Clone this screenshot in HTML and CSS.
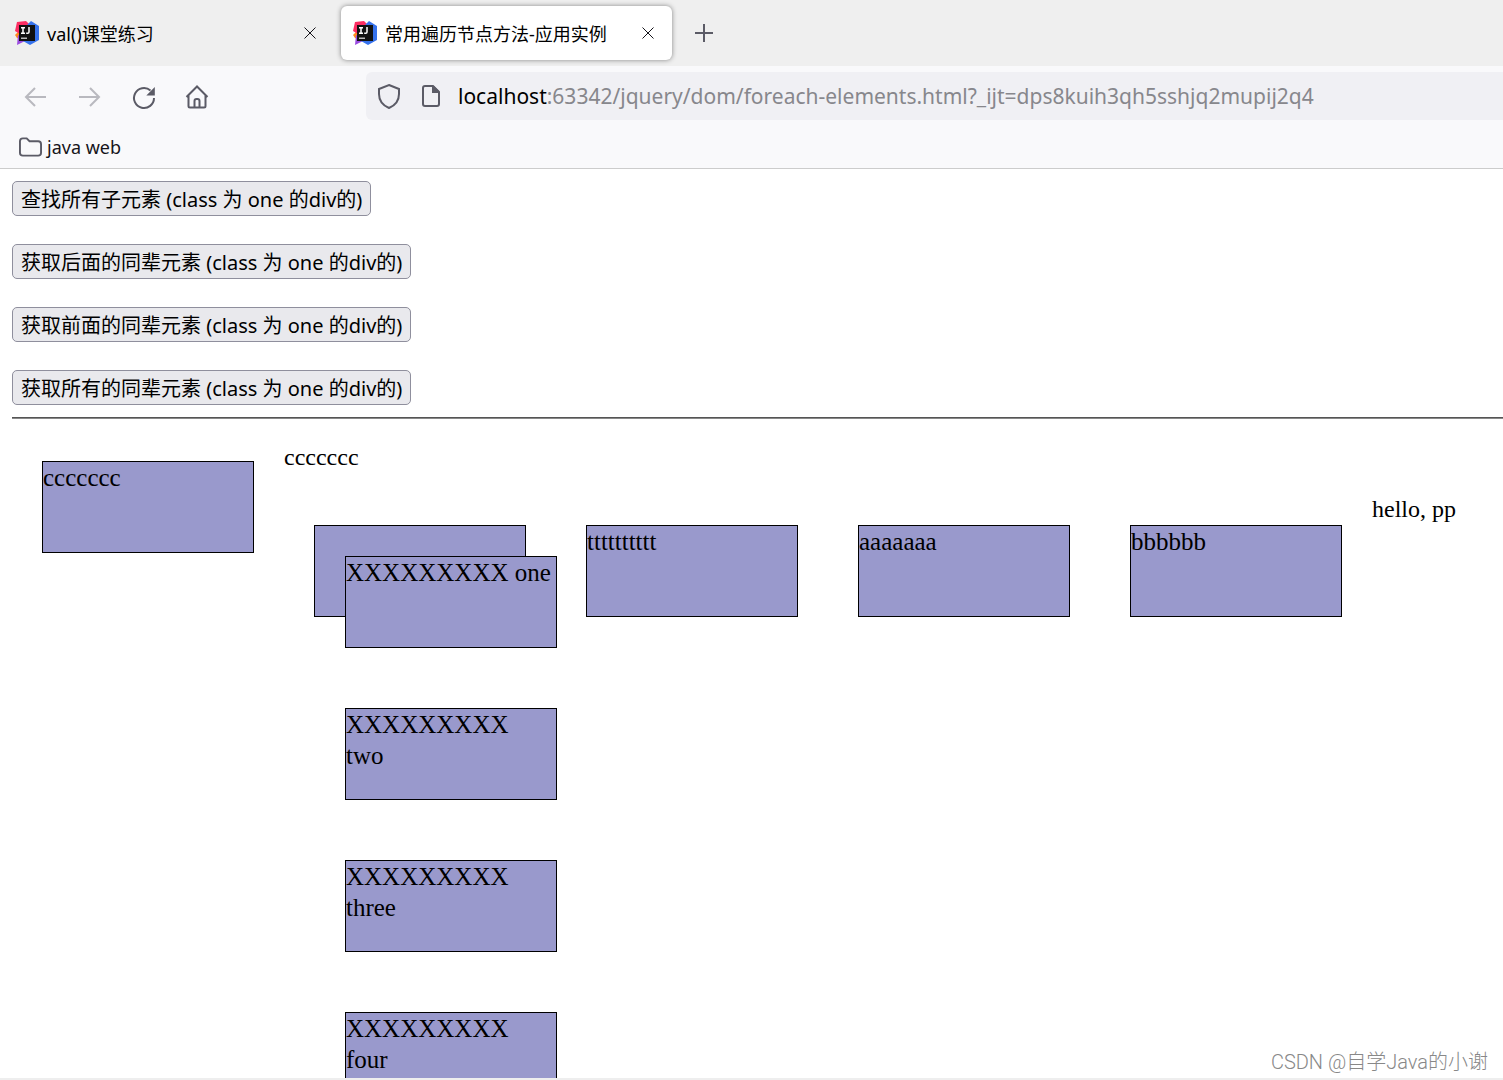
FILE: index.html
```html
<!DOCTYPE html>
<html lang="zh-CN">
<head>
<meta charset="utf-8">
<title>常用遍历节点方法-应用实例</title>
<link rel="stylesheet" href="styles.css">
</head>
<body>
<svg class="defs" aria-hidden="true">
  <symbol id="idea" viewBox="0 0 24 24">
    <path fill="#ff8a1c" d="M0 14 5 9v9l-3-1z"/>
    <path fill="#9a4be0" d="M3 14 2 24l10-5z"/>
    <path fill="#fc2d62" d="M2 1 11 0l5 5-8 10-8-5z"/>
    <path fill="#3672ec" d="m12 4 4-4 8 5v14l-9 5-7-4z"/>
    <path fill="#111" d="M4 4h16v16H4z"/>
    <path fill="none" stroke="#fff" stroke-width="1.5" d="M6 6.700h4M8 6.700v5.600M6 12.300h4M14 6v5q0 1.300-1.300 1.300h-1.500"/>
    <path fill="#bbb" d="M6 16.500h6V18H6z"/>
  </symbol>
  <symbol id="close" viewBox="0 0 12 12"><path d="m.5.5 11 11m0-11-11 11"/></symbol>
</svg>

<header class="browser">
  <nav class="tabs">
    <div class="tab">
      <svg class="favicon"><use href="#idea"/></svg>
      <span class="tab-title">val()课堂练习</span>
      <button class="close" aria-label="关闭"><svg><use href="#close"/></svg></button>
    </div>
    <div class="tab active">
      <svg class="favicon"><use href="#idea"/></svg>
      <span class="tab-title">常用遍历节点方法-应用实例</span>
      <button class="close" aria-label="关闭"><svg><use href="#close"/></svg></button>
    </div>
    <button class="new-tab" aria-label="新标签页"><svg viewBox="0 0 18 18"><path d="M9 0v18M0 9h18"/></svg></button>
  </nav>
  <div class="toolbar">
    <div class="nav-buttons">
      <button class="icon faded" aria-label="后退"><svg viewBox="0 0 24 24"><path d="M22 13H2m9-9-9 9 9 9"/></svg></button>
      <button class="icon faded" aria-label="前进"><svg viewBox="0 0 24 24"><path d="M1 13h20m-9-9 9 9-9 9"/></svg></button>
      <button class="icon" aria-label="刷新"><svg viewBox="0 0 24 24"><path d="M22 14a10 10 0 1 1-3.500-7.600"/><path class="solid" d="M22.800 3v8.500h-8.500z"/></svg></button>
      <button class="icon" aria-label="主页"><svg viewBox="0 0 24 24"><path d="M.500 13 11 2.500 21.500 13M2.500 11.500V22q0 1.500 1.500 1.500h14q1.500 0 1.500-1.500V11.500M8.500 23v-6q0-2 2-2h1q2 0 2 2v6"/></svg></button>
    </div>
    <div class="address">
      <svg class="address-icon" viewBox="0 0 24 24"><path d="M12 1 22 5v5c0 6-3 11-10 14C5 21 2 16 2 10V5z"/></svg>
      <svg class="address-icon page-icon" viewBox="0 0 24 24"><path d="M14 2H6Q4 2 4 4v16q0 2 2 2h12q2 0 2-2V8z"/><path class="solid" d="M13 2h2l5 5v2h-7z"/></svg>
      <label class="host" for="url">localhost</label>
      <input class="url" id="url" type="text" spellcheck="false" value=":63342/jquery/dom/foreach-elements.html?_ijt=dps8kuih3qh5sshjq2mupij2q4">
    </div>
  </div>
  <div class="bookmarks">
    <a class="bookmark" href="#"><svg viewBox="0 0 24 20"><path d="M1 4q0-3 3-3h4l3 3h9q3 0 3 3v9q0 3-3 3H4q-3 0-3-3z"/></svg>java web</a>
  </div>
</header>

<main class="page">
  <div class="actions">
    <button class="action">查找所有子元素 (class 为 one 的div的)</button>
    <button class="action">获取后面的同辈元素 (class 为 one 的div的)</button>
    <button class="action">获取前面的同辈元素 (class 为 one 的div的)</button>
    <button class="action">获取所有的同辈元素 (class 为 one 的div的)</button>
  </div>
  <hr class="rule">
  <div class="demo">
    <div class="box">ccccccc</div>
    <div class="siblings">
      <p class="text">ccccccc</p>
      <div class="row">
        <div class="box parent">
          <div class="box">XXXXXXXXX one</div>
          <div class="box">XXXXXXXXX<br>two</div>
          <div class="box">XXXXXXXXX<br>three</div>
          <div class="box">XXXXXXXXX<br>four</div>
        </div>
        <div class="box">tttttttttt</div>
        <div class="box">aaaaaaa</div>
        <div class="box">bbbbbb</div>
        <p class="text">hello, pp</p>
      </div>
    </div>
  </div>
</main>
<div class="watermark">CSDN @自学Java的小谢</div>
</body>
</html>
```

FILE: styles.css
```css
* { box-sizing: border-box; }

body {
  margin: 0;
  height: 100vh;
  display: flex;
  flex-direction: column;
  position: relative;
  overflow: hidden;
  background: #fff;
  color: #000;
  font-family: "Liberation Serif", "Noto Sans CJK SC", serif;
}

.defs { display: none; }

svg { display: block; overflow: visible; fill: none; stroke: #5b5b66; stroke-width: 2; }
.solid { fill: #5b5b66; stroke: none; }

.browser {
  flex: none;
  border-bottom: 1px solid #ccc;
  background: #f9f9fb;
  font-family: "Noto Sans", "Noto Sans CJK SC", sans-serif;
}
.browser button { padding: 0; border: 0; background: none; }

.tabs {
  display: flex;
  align-items: center;
  gap: 7px;
  height: 66px;
  padding: 0 3px;
  background: #efefef;
}
.tab {
  display: flex;
  align-items: center;
  gap: 8px;
  width: 331px;
  height: 54px;
  padding: 0 18px 0 12px;
  border-radius: 6px;
  font-size: 18px;
}
.active { background: #fff; box-shadow: 0 0 5px rgba(0, 0, 0, .45); }
.favicon { width: 24px; height: 24px; stroke: none; }
.tab-title { flex: 1; white-space: nowrap; }
.close svg { width: 12px; height: 12px; stroke: #15141a; stroke-width: 1; }
.new-tab { margin-left: 16px; }
.new-tab svg { width: 18px; height: 18px; }

.toolbar { display: flex; align-items: center; height: 60px; }
.nav-buttons { display: flex; gap: 30px; width: 366px; padding-left: 24px; }
.icon svg { width: 24px; height: 24px; }
.faded { opacity: .4; }

.address {
  flex: 1;
  display: flex;
  align-items: center;
  height: 48px;
  padding-left: 11px;
  border-radius: 6px 0 0 6px;
  background: #f0f0f4;
  font-size: 21px;
}
.address-icon { width: 24px; height: 24px; margin-right: 18px; }
.page-icon { margin-right: 15px; }
.url {
  flex: 1;
  min-width: 0;
  padding: 0;
  border: 0;
  outline: 0;
  background: none;
  color: #87878c;
  font: inherit;
}

.bookmarks { height: 42px; padding: 0 19px; }
.bookmark {
  display: inline-flex;
  align-items: center;
  gap: 5px;
  height: 42px;
  color: #15141a;
  font-size: 18px;
  text-decoration: none;
}
.bookmark svg { width: 23px; height: 20px; }

.page {
  flex: 1;
  min-height: 0;
  overflow: hidden;
  padding: 12px 0 0 12px;
  border-bottom: 2px solid #eee;
}
.actions {
  display: flex;
  flex-direction: column;
  align-items: flex-start;
  gap: 28px;
}
.action {
  height: 35px;
  padding: 0 8px;
  border: 1px solid #8f8f9d;
  border-radius: 5px;
  background: #e9e9ed;
  color: #000;
  font: 20px "Noto Sans", "Noto Sans CJK SC", sans-serif;
}
.rule { margin: 12px 0; border: 0; border-top: 1px solid #555; border-bottom: 1px solid #888; }

.demo { display: flex; align-items: flex-start; }
.box {
  flex: none;
  width: 212px;
  height: 92px;
  margin: 30px;
  border: 1px solid #000;
  background: #99c;
  font-size: 25px;
  line-height: 31px;
}
.parent { display: flex; flex-direction: column; }
.siblings { display: flex; flex-direction: column; gap: 24px; padding-top: 12px; }
.row { display: flex; align-items: flex-start; }
.text { flex: none; margin: 0; font-size: 24px; line-height: 28px; }

.watermark {
  position: absolute;
  right: 15px;
  bottom: 5px;
  color: #888;
  font: 300 20px Roboto, "Noto Sans CJK SC", sans-serif;
}
```
